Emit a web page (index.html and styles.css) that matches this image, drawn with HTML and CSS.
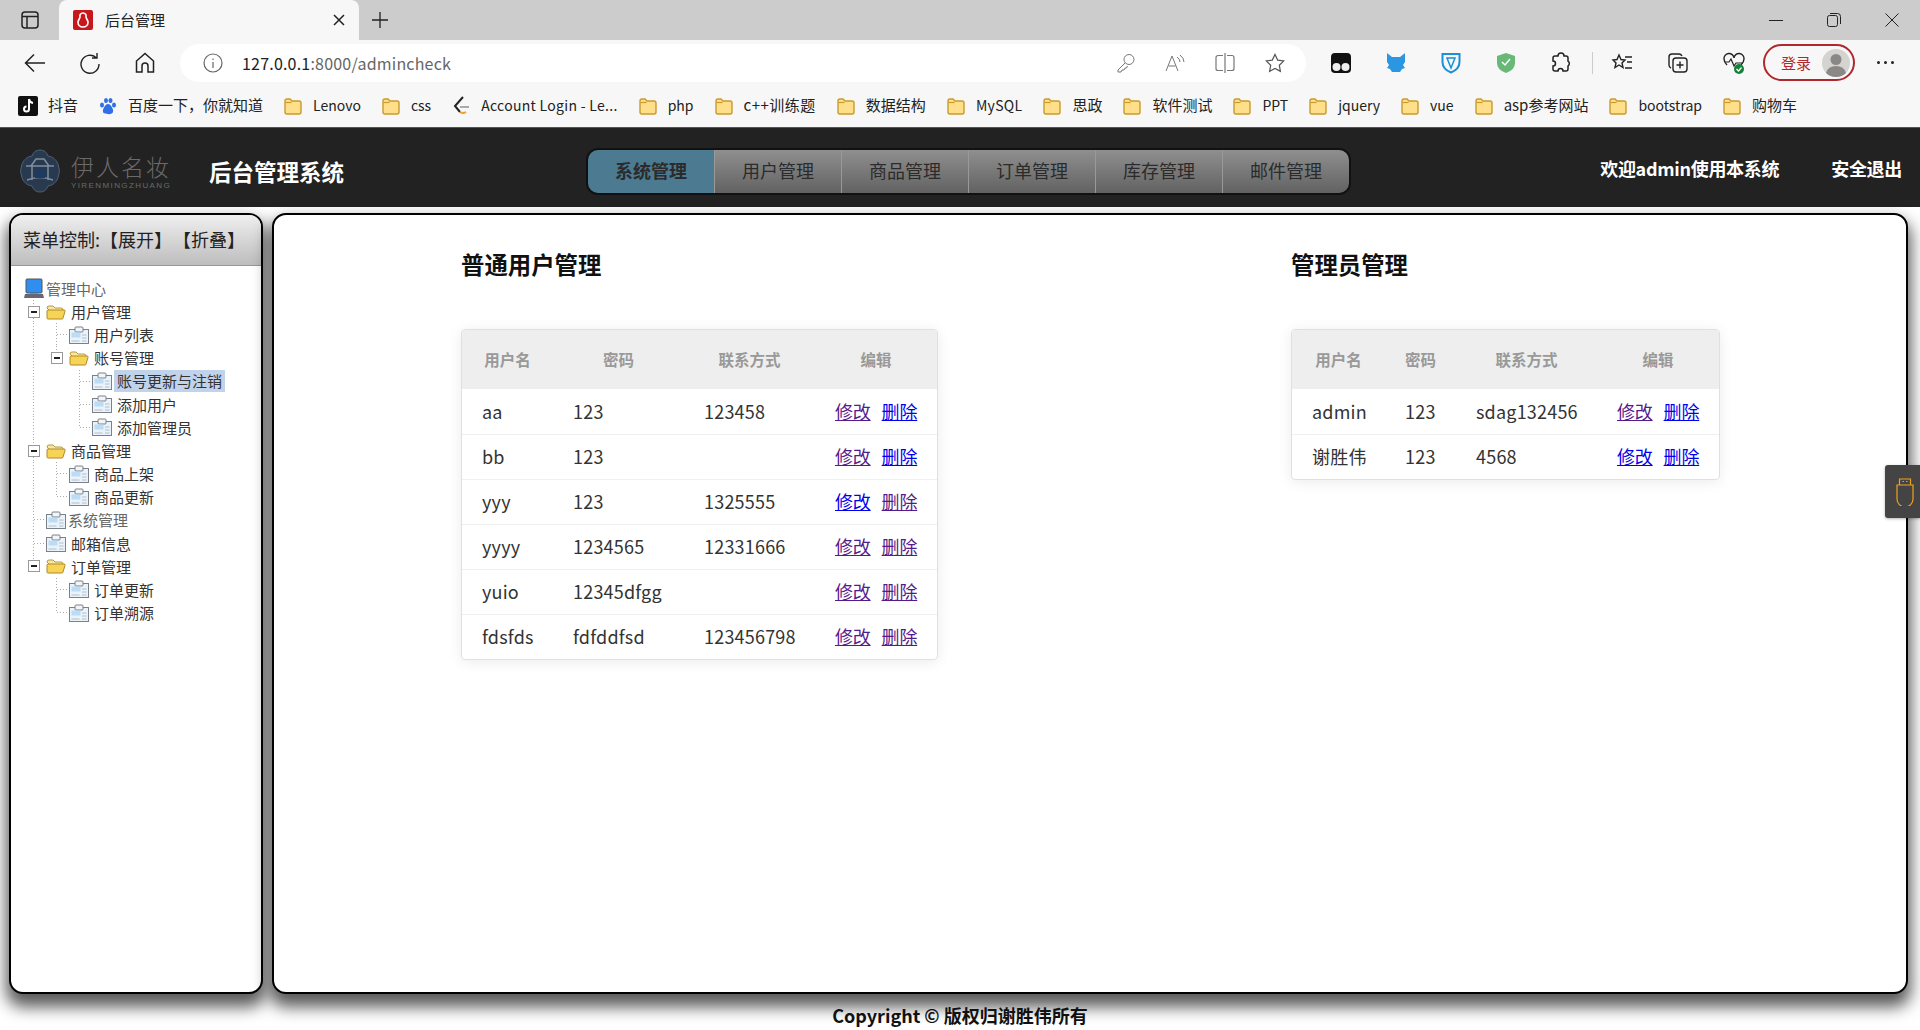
FILE: index.html
```html
<!DOCTYPE html>
<html lang="zh-CN">

<head>
    <meta charset="UTF-8">
    <title>后台管理</title>
    <link rel="stylesheet" href="styles.css">
</head>

<body>
    <svg class="defs" width="0" height="0">
        <symbol id="i-folder" viewBox="0 0 20 20">
            <path d="M2 5a2 2 0 0 1 2-2h3l2 2h7a2 2 0 0 1 2 2v9a2 2 0 0 1-2 2H4a2 2 0 0 1-2-2z" fill="#ffdf8a" stroke="#c99a2e" stroke-width="1.4"/>
            <path d="M2.5 6.5h6" stroke="#c99a2e" stroke-width="1.2"/>
        </symbol>
        <symbol id="i-tfolder" viewBox="0 0 20 16">
            <path d="M1 4q0-2 2-2h4l2 2h6q2 0 2 2v1H4z" fill="#f5e7a8" stroke="#b99a3a"/>
            <path d="M1 14V7q0-1 1-1h16q1.500 0 1 1.500L17 14q0 1-1 1H2q-1 0-1-1z" fill="#f7d455" stroke="#b08a2a"/>
        </symbol>
        <symbol id="i-tdoc" viewBox="0 0 20 18">
            <rect x=".5" y="3.500" width="19" height="14" fill="#e9f3fb" stroke="#7b818a"/>
            <rect x="6" y="1" width="8" height="5" rx="1" fill="#f2f4f6" stroke="#7b818a"/>
            <rect x="2.500" y="6.500" width="9" height="5" fill="#bcdcf5"/>
            <path d="M13 9h4.500M13 12h4.500M13 15h4.500M2.500 15h8" stroke="#b8bdc4"/>
        </symbol>
    </svg>

    <div class="browser">
        <div class="tabstrip">
            <svg class="tab-side" width="18" height="18" viewBox="0 0 18 18" fill="none" stroke="#222" stroke-width="1.500">
                <rect x="1" y="1" width="16" height="16" rx="3"/>
                <path d="M1 5.500h16M6 5.500V17"/>
            </svg>
            <div class="tab">
                <svg width="20" height="20" viewBox="0 0 20 20">
                    <rect width="20" height="20" rx="2" fill="#c8161d"/>
                    <path d="M10 3c-2.500 0-3.500 2-3 4 .2 1-2 3-2 5.500S7 17 10 17s5-2 5-4.500S12.800 8 13 7c.5-2-.5-4-3-4z" fill="none" stroke="#fff" stroke-width="1.600"/>
                </svg>
                <span class="tab-title">后台管理</span>
                <svg class="tab-close" width="12" height="12" viewBox="0 0 12 12" stroke="#222" stroke-width="1.500">
                    <path d="M1 1l10 10M11 1L1 11"/>
                </svg>
            </div>
            <svg class="tab-new" width="18" height="18" viewBox="0 0 18 18" stroke="#222" stroke-width="1.300">
                <path d="M9 1v16M1 9h16"/>
            </svg>
            <div class="win-btns">
                <svg width="14" height="14" viewBox="0 0 14 14" stroke="#222"><path d="M0 7.500h14"/></svg>
                <svg width="14" height="14" viewBox="0 0 14 14" fill="none" stroke="#222"><rect x=".5" y="2.500" width="10" height="11" rx="2"/><path d="M3 .5h7.500a3 3 0 0 1 3 3V11"/></svg>
                <svg width="14" height="14" viewBox="0 0 14 14" stroke="#222"><path d="M.5.5l13 13M13.500.5l-13 13"/></svg>
            </div>
        </div>

        <div class="toolbar">
            <svg class="tb-back" width="22" height="20" viewBox="0 0 22 20" fill="none" stroke="#222" stroke-width="1.500"><path d="M21 10H2M10 1.500L1.500 10l8.500 8.500"/></svg>
            <svg class="tb-reload" width="20" height="22" viewBox="0 0 20 22" fill="none" stroke="#222" stroke-width="1.400"><path d="M16 5.500A9 9 0 1 0 19 12M17 1v5h-5"/></svg>
            <svg class="tb-home" width="20" height="22" viewBox="0 0 20 22" fill="none" stroke="#222" stroke-width="1.500"><path d="M1.500 20V9L10 1.500 18.500 9v11h-5.500v-6a3 3 0 0 0-6 0v6z"/></svg>
            <div class="addr">
                <svg width="20" height="20" viewBox="0 0 20 20" fill="none" stroke="#666" stroke-width="1.200"><circle cx="10" cy="10" r="9"/><path d="M10 9v6M10 5.500v1.500"/></svg>
                <span class="url"><b>127.0.0.1</b>:8000/admincheck</span>
                <div class="addr-icons">
                    <svg width="18" height="20" viewBox="0 0 18 20" fill="none" stroke="#777"><circle cx="12" cy="6.500" r="5"/><path d="M8 10l-7 7v2h3l1-2h2l1-2h1.500l1-2"/></svg>
                    <svg width="20" height="20" viewBox="0 0 20 20" fill="none" stroke="#777"><path d="M1 18L7 3l6 15M3.500 13h7M12 4q3 2 3 5M15 2q4 3 4 7"/></svg>
                    <svg width="20" height="22" viewBox="0 0 20 22" fill="none" stroke="#777" stroke-width="1.200"><path d="M10 1v20M8 3.500H3a2 2 0 0 0-2 2v11a2 2 0 0 0 2 2h5M12 3.500h5a2 2 0 0 1 2 2v11a2 2 0 0 1-2 2h-5"/></svg>
                    <svg width="20" height="20" viewBox="0 0 20 20" fill="none" stroke="#555" stroke-width="1.200"><path d="M10 1.500l2.700 5.600 6.100.8-4.500 4.300 1.100 6.100L10 15.400l-5.400 2.900 1.100-6.100L1.200 7.900l6.100-.8z"/></svg>
                </div>
            </div>
            <div class="ext-icons">
                <svg width="20" height="22" viewBox="0 0 20 22"><rect y="1" width="20" height="20" rx="4" fill="#111"/><circle cx="5.500" cy="15" r="4" fill="#eee"/><circle cx="14.500" cy="15" r="4" fill="#eee"/></svg>
                <svg width="20" height="22" viewBox="0 0 20 22"><path d="M1 1l5 4h8l5-4v9l-2 3 2 3-3 1-2 3H6l-2-3-3-1 2-3-2-3z" fill="#2b97e3"/></svg>
                <svg width="20" height="22" viewBox="0 0 20 22" fill="none" stroke="#1b8fd8" stroke-width="2"><path d="M1.500 2h17v8q0 7-8.500 10.500Q1.500 17 1.500 10z"/><path d="M6 6h8l-4 10z" stroke-width="1.500"/></svg>
                <svg width="20" height="22" viewBox="0 0 20 22"><path d="M10 1l9 3v7q0 7-9 10Q1 18 1 11V4z" fill="#68b878"/><path d="M6 10l3 3 5-6" fill="none" stroke="#fff" stroke-width="1.500"/></svg>
                <svg width="20" height="22" viewBox="0 0 20 22" fill="none" stroke="#222" stroke-width="1.500"><path d="M7 4a3 3 0 0 1 6 0h2a2 2 0 0 1 2 2v3a3 3 0 0 1 0 5v3a2 2 0 0 1-2 2h-3a2.500 2.500 0 0 0-5 0H4a2 2 0 0 1-2-2v-3a2.500 2.500 0 0 0 0-5V6a2 2 0 0 1 2-2z"/></svg>
                <i class="tb-div"></i>
                <svg width="22" height="22" viewBox="0 0 22 22" fill="none" stroke="#222" stroke-width="1.400"><path d="M8 3l2 4.500 4 .5-3 3 1 4.500-4-2.500-4 2.500 1-4.500-3-3 4-.5zM14 5h7M16 10h5M14 16h7"/></svg>
                <svg width="20" height="22" viewBox="0 0 20 22" fill="none" stroke="#222" stroke-width="1.400"><rect x="5" y="6" width="14" height="14" rx="3"/><path d="M3 16q-2-1-2-3V5q0-3 3-3h7q2 0 3 2M12 9.500v7M8.500 13h7"/></svg>
                <svg width="22" height="22" viewBox="0 0 22 22"><path d="M4 13Q1 10 1 7a5 5 0 0 1 10-1 5 5 0 0 1 10 1q0 3-3 6" fill="none" stroke="#222" stroke-width="1.400"/><path d="M2 10h4l2-3 3 7 2-3h7" fill="none" stroke="#222" stroke-width="1.200"/><circle cx="16" cy="17" r="5" fill="#14803a"/><path d="M13.500 17l2 2 3-3.500" fill="none" stroke="#fff" stroke-width="1.200"/></svg>
            </div>
            <div class="login">
                <span>登录</span>
                <svg width="28" height="28" viewBox="0 0 28 28"><circle cx="14" cy="14" r="14" fill="#d5d3d0"/><circle cx="14" cy="10.500" r="5.500" fill="#8a8886"/><path d="M4 24q2-7 10-7t10 7q-4 4-10 4T4 24z" fill="#8a8886"/></svg>
            </div>
            <div class="tb-more"><i></i><i></i><i></i></div>
        </div>

        <div class="bookmarks">
            <a class="bm">
                <svg width="20" height="20" viewBox="0 0 20 20"><rect width="20" height="20" rx="2" fill="#111"/><path d="M11 3v10a2.500 2.500 0 1 1-2.500-2.500M11 3q.5 3.500 4 4" fill="none" stroke="#fff" stroke-width="2"/></svg>
                <span>抖音</span>
            </a>
            <a class="bm">
                <svg width="20" height="20" viewBox="0 0 20 20" fill="#2f6fe8"><ellipse cx="4" cy="9" rx="2" ry="2.500"/><ellipse cx="8" cy="4.500" rx="2" ry="2.500"/><ellipse cx="12.500" cy="4.500" rx="2" ry="2.500"/><ellipse cx="16" cy="9" rx="2" ry="2.500"/><path d="M10 8q2.500 0 4 3.500 2 3 .5 5.500-1.500 1.500-4.500 1t-4.500-1q-1.500-2.500.5-5.500Q7.500 8 10 8z"/></svg>
                <span>百度一下，你就知道</span>
            </a>
            <a class="bm"><svg width="20" height="20"><use href="#i-folder"/></svg><span class="en">Lenovo</span></a>
            <a class="bm"><svg width="20" height="20"><use href="#i-folder"/></svg><span class="en">css</span></a>
            <a class="bm">
                <svg width="20" height="20" viewBox="0 0 20 20" fill="none" stroke-width="2"><path d="M12 1L4 10l5 6" stroke="#222"/><path d="M9 16q3 2 6 0" stroke="#f0a030"/><path d="M9 11h9" stroke="#aaa"/></svg>
                <span class="en wide">Account Login - Le...</span>
            </a>
            <a class="bm"><svg width="20" height="20"><use href="#i-folder"/></svg><span class="en">php</span></a>
            <a class="bm"><svg width="20" height="20"><use href="#i-folder"/></svg><span class="wider">c++训练题</span></a>
            <a class="bm"><svg width="20" height="20"><use href="#i-folder"/></svg><span>数据结构</span></a>
            <a class="bm"><svg width="20" height="20"><use href="#i-folder"/></svg><span class="en wide">MySQL</span></a>
            <a class="bm"><svg width="20" height="20"><use href="#i-folder"/></svg><span>思政</span></a>
            <a class="bm"><svg width="20" height="20"><use href="#i-folder"/></svg><span>软件测试</span></a>
            <a class="bm"><svg width="20" height="20"><use href="#i-folder"/></svg><span class="en">PPT</span></a>
            <a class="bm"><svg width="20" height="20"><use href="#i-folder"/></svg><span class="en">jquery</span></a>
            <a class="bm"><svg width="20" height="20"><use href="#i-folder"/></svg><span class="en">vue</span></a>
            <a class="bm"><svg width="20" height="20"><use href="#i-folder"/></svg><span>asp参考网站</span></a>
            <a class="bm"><svg width="20" height="20"><use href="#i-folder"/></svg><span class="en">bootstrap</span></a>
            <a class="bm"><svg width="20" height="20"><use href="#i-folder"/></svg><span>购物车</span></a>
        </div>
    </div>

    <header class="top">
        <div class="logo">
            <svg width="44" height="44" viewBox="0 0 44 44">
                <path d="M22 1q6 0 8 6 7 1 10 8 3 7 0 14-3 7-10 8-2 6-8 6t-8-6q-7-1-10-8-3-7 0-14 3-7 10-8 2-6 8-6z" fill="#2a3a4e" stroke="#4d6077"/>
                <path d="M8 17h28M13 17l5-7h8l5 7M14 17v14M30 17v14M9 31q13-5 26 0" fill="none" stroke="#7e8fa3" stroke-width="1.500"/>
                <path d="M17 21h10v8H17z" fill="#1d3a63"/>
            </svg>
            <div class="logo-text">
                <span class="logo-cn">伊人名妆</span>
                <span class="logo-en">YIRENMINGZHUANG</span>
            </div>
            <h1>后台管理系统</h1>
        </div>
        <nav class="menu">
            <a class="active">系统管理</a>
            <a>用户管理</a>
            <a>商品管理</a>
            <a>订单管理</a>
            <a>库存管理</a>
            <a>邮件管理</a>
        </nav>
        <div class="user">
            <span>欢迎admin使用本系统</span>
            <span>安全退出</span>
        </div>
    </header>

    <div class="page">
        <aside class="side">
            <div class="side-head">菜单控制:【展开】 【折叠】</div>
            <ul class="tree">
                <li class="root">
                    <svg width="20" height="22" viewBox="0 0 20 22">
                        <rect x="2" y="1" width="16" height="14" rx="1" fill="#2f8ef0" stroke="#555"/>
                        <path d="M6 15h8v1H6z" fill="#889"/>
                        <path d="M1 16h18l1 4H0z" fill="#667"/>
                    </svg>
                    <span class="t-gap grey">管理中心</span>
                </li>
                <li><i class="c minus"><b></b></i><svg class="t-ic" width="20" height="16"><use href="#i-tfolder"/></svg><span>用户管理</span></li>
                <li><i class="c line"></i><i class="c tee"></i><svg class="t-ic" width="20" height="18"><use href="#i-tdoc"/></svg><span>用户列表</span></li>
                <li><i class="c line"></i><i class="c minus-end"><b></b></i><svg class="t-ic" width="20" height="16"><use href="#i-tfolder"/></svg><span>账号管理</span></li>
                <li><i class="c line"></i><i class="c"></i><i class="c tee"></i><svg class="t-ic" width="20" height="18"><use href="#i-tdoc"/></svg><span class="sel">账号更新与注销</span></li>
                <li><i class="c line"></i><i class="c"></i><i class="c tee"></i><svg class="t-ic" width="20" height="18"><use href="#i-tdoc"/></svg><span>添加用户</span></li>
                <li><i class="c line"></i><i class="c"></i><i class="c end"></i><svg class="t-ic" width="20" height="18"><use href="#i-tdoc"/></svg><span>添加管理员</span></li>
                <li><i class="c minus"><b></b></i><svg class="t-ic" width="20" height="16"><use href="#i-tfolder"/></svg><span>商品管理</span></li>
                <li><i class="c line"></i><i class="c tee"></i><svg class="t-ic" width="20" height="18"><use href="#i-tdoc"/></svg><span>商品上架</span></li>
                <li><i class="c line"></i><i class="c end"></i><svg class="t-ic" width="20" height="18"><use href="#i-tdoc"/></svg><span>商品更新</span></li>
                <li><i class="c tee"></i><svg class="t-ic" width="20" height="18"><use href="#i-tdoc"/></svg><span class="t-near grey">系统管理</span></li>
                <li><i class="c tee"></i><svg class="t-ic" width="20" height="18"><use href="#i-tdoc"/></svg><span>邮箱信息</span></li>
                <li><i class="c minus-end"><b></b></i><svg class="t-ic" width="20" height="16"><use href="#i-tfolder"/></svg><span>订单管理</span></li>
                <li><i class="c"></i><i class="c tee"></i><svg class="t-ic" width="20" height="18"><use href="#i-tdoc"/></svg><span>订单更新</span></li>
                <li><i class="c"></i><i class="c end"></i><svg class="t-ic" width="20" height="18"><use href="#i-tdoc"/></svg><span>订单溯源</span></li>
            </ul>
        </aside>

        <main class="main">
            <section class="block block-users">
                <h2>普通用户管理</h2>
                <table>
                    <colgroup><col class="w91"><col class="w131"><col class="w131"><col class="w122"></colgroup>
                    <thead>
                        <tr><th>用户名</th><th>密码</th><th>联系方式</th><th>编辑</th></tr>
                    </thead>
                    <tbody>
                        <tr><td>aa</td><td>123</td><td>123458</td><td><a class="seen" href="#">修改</a><a href="#">删除</a></td></tr>
                        <tr><td>bb</td><td>123</td><td></td><td><a class="seen" href="#">修改</a><a href="#">删除</a></td></tr>
                        <tr><td>yyy</td><td>123</td><td>1325555</td><td><a href="#">修改</a><a class="seen" href="#">删除</a></td></tr>
                        <tr><td>yyyy</td><td>1234565</td><td>12331666</td><td><a class="seen" href="#">修改</a><a class="seen" href="#">删除</a></td></tr>
                        <tr><td>yuio</td><td>12345dfgg</td><td></td><td><a class="seen" href="#">修改</a><a class="seen" href="#">删除</a></td></tr>
                        <tr><td>fdsfds</td><td>fdfddfsd</td><td>123456798</td><td><a class="seen" href="#">修改</a><a class="seen" href="#">删除</a></td></tr>
                    </tbody>
                </table>
            </section>
            <section class="block block-admins">
                <h2>管理员管理</h2>
                <table>
                    <colgroup><col class="w93"><col class="w71"><col class="w141"><col class="w122"></colgroup>
                    <thead>
                        <tr><th>用户名</th><th>密码</th><th>联系方式</th><th>编辑</th></tr>
                    </thead>
                    <tbody>
                        <tr><td>admin</td><td>123</td><td>sdag132456</td><td><a class="seen" href="#">修改</a><a href="#">删除</a></td></tr>
                        <tr><td>谢胜伟</td><td>123</td><td>4568</td><td><a href="#">修改</a><a href="#">删除</a></td></tr>
                    </tbody>
                </table>
            </section>
        </main>
    </div>

    <footer class="foot">Copyright © 版权归谢胜伟所有</footer>

    <div class="float-tab">
        <svg width="18" height="28" viewBox="0 0 18 28" fill="none" stroke="#f0a020" stroke-width="1.200">
            <path d="M3.500 1h11v6h-11zM1 7h16v14a6 6 0 0 1-16 0zM6.500 3.500h1.500M10 3.500h1.500"/>
        </svg>
    </div>
</body>

</html>
```

FILE: styles.css
```css
* {
    margin: 0;
    padding: 0;
    box-sizing: border-box;
}

html, body {
    height: 100%;
    overflow: hidden;
}

body {
    display: flex;
    flex-direction: column;
    background-color: #fff;
    color: #333;
    font-family: "Noto Sans CJK SC", "Liberation Sans", sans-serif;
}

.defs {
    position: absolute;
}

/* browser chrome */
.browser {
    height: 128px;
    background-color: #f7f7f7;
    border-bottom: 1px solid #555;
    flex-shrink: 0;
}

.tabstrip {
    height: 40px;
    background-color: #ccc;
    display: flex;
    align-items: center;
}

.tab-side {
    margin-left: 21px;
}

.tab {
    width: 300px;
    height: 40px;
    margin-left: 20px;
    padding: 0 14px;
    background-color: #f7f7f7;
    border-radius: 8px 8px 0 0;
    display: flex;
    align-items: center;
}

.tab-title {
    margin-left: 12px;
    padding-bottom: 2px;
    font-size: 15px;
    color: #222;
}

.tab-close {
    margin-left: auto;
    margin-right: 0;
}

.tab-new {
    margin-left: 12px;
}

.win-btns {
    margin-left: auto;
    padding-right: 21px;
    display: flex;
    gap: 44px;
}

.toolbar {
    height: 45px;
    display: flex;
    align-items: center;
}

.tb-back {
    margin-left: 24px;
}

.tb-reload {
    margin-left: 34px;
}

.tb-home {
    margin-left: 35px;
}

.addr {
    width: 1126px;
    height: 38px;
    margin-left: 25px;
    padding: 0 21px 0 23px;
    background-color: #fff;
    border-radius: 19px;
    display: flex;
    align-items: center;
}

.url {
    margin-left: 19px;
    font-size: 16px;
    letter-spacing: .2px;
    color: #666;
}

.url b {
    font-weight: normal;
    color: #222;
}

.addr-icons {
    margin-left: auto;
    display: flex;
    align-items: center;
    gap: 30px;
}

.ext-icons {
    margin-left: 25px;
    display: flex;
    align-items: center;
    gap: 35px;
}

.tb-div {
    width: 1px;
    height: 22px;
    margin: 0 -17px 0 -14px;
    background-color: #ccc;
}

.login {
    width: 92px;
    height: 37px;
    margin-left: 18px;
    padding: 0 3px 0 16px;
    border: 2px solid #b0282e;
    border-radius: 19px;
    display: flex;
    align-items: center;
    justify-content: space-between;
    font-size: 15px;
    color: #b0282e;
}

.tb-more {
    margin-left: 22px;
    display: flex;
    gap: 4px;
}

.tb-more i {
    width: 3px;
    height: 3px;
    border-radius: 50%;
    background-color: #222;
}

.bookmarks {
    height: 42px;
    padding-left: 8px;
    display: flex;
    align-items: center;
}

.bm {
    padding: 0 10px;
    display: flex;
    align-items: center;
    gap: 10px;
    font-size: 15px;
    color: #222;
    white-space: nowrap;
}

.bm span {
    padding-bottom: 3px;
}

.bm .en {
    font-size: 14px;
}

.bm .wide {
    letter-spacing: .3px;
}

.bm .wider {
    letter-spacing: .5px;
}

/* site header */
.top {
    height: 79px;
    padding-top: 7px;
    background-color: #222;
    display: flex;
    align-items: center;
    flex-shrink: 0;
}

.logo {
    width: 586px;
    padding-left: 18px;
    display: flex;
    align-items: center;
}

.logo-text {
    width: 100px;
    margin-left: 9px;
    display: flex;
    flex-direction: column;
    color: #6a6a6a;
}

.logo-cn {
    font-size: 23px;
    font-weight: 300;
    letter-spacing: 2px;
    line-height: 30px;
    white-space: nowrap;
}

.logo-en {
    font-family: "Liberation Sans", sans-serif;
    font-size: 8px;
    letter-spacing: 1.400px;
    line-height: 10px;
    white-space: nowrap;
}

h1 {
    margin-left: 38px;
    font-size: 22.500px;
    color: #fff;
}

.menu {
    display: flex;
    border: 2px solid #111;
    border-radius: 12px;
    overflow: hidden;
}

.menu a {
    width: 127px;
    height: 43px;
    line-height: 41px;
    text-align: center;
    font-size: 18px;
    color: #2b2b2b;
    background: linear-gradient(#8f8f8f, #626262);
    border-left: 1px solid #999;
}

.menu a.active {
    width: 126px;
    background: #4c7a90;
    border-left: 0;
    font-weight: bold;
}

.user {
    margin: -7px 0 0 auto;
    padding-right: 18px;
    display: flex;
    gap: 52px;
    font-size: 18px;
    font-weight: bold;
    letter-spacing: -.3px;
    color: #fff;
}

/* panels */
.page {
    height: 787px;
    padding: 6px 12px 0 9px;
    display: flex;
    gap: 9px;
    flex-shrink: 0;
}

.side, .main {
    height: 781px;
    background-color: #fff;
    border: 2px solid #000;
    border-radius: 14px;
    box-shadow: 0 10px 16px 3px rgba(0, 0, 0, .65);
}

.side {
    width: 254px;
    flex-shrink: 0;
}

.side-head {
    height: 51px;
    padding-left: 12px;
    line-height: 49px;
    font-size: 18px;
    word-spacing: -3px;
    color: #222;
    background: linear-gradient(#efefef, #bdbdbd);
    border-bottom: 1px solid #6f9fd8;
    border-radius: 12px 12px 0 0;
    white-space: nowrap;
}

.tree {
    padding: 11px 0 0 11px;
    list-style: none;
    font-size: 15px;
}

.tree li {
    height: 23.150px;
    display: flex;
    align-items: center;
}

.root {
    padding-left: 2px;
}

.t-gap {
    margin-left: 2px;
}

.t-ic {
    margin: 0 5px 0 1px;
    flex-shrink: 0;
}

.t-near {
    margin-left: -3px;
}

.grey {
    color: #666;
}

.sel {
    padding: 0 3px;
    margin-left: -3px;
    line-height: 22px;
    background-color: #c1d2eb;
}

.c {
    width: 23px;
    height: 100%;
    flex-shrink: 0;
    display: flex;
    align-items: center;
    justify-content: center;
}

.line, .tee, .minus {
    background: repeating-linear-gradient(#aaa 0 1px, transparent 1px 3px) 11px 0 / 1px 100% no-repeat;
}

.end, .minus-end {
    background: repeating-linear-gradient(#aaa 0 1px, transparent 1px 3px) 11px 0 / 1px 50% no-repeat;
}

.tee::after, .end::after {
    content: "";
    width: 11px;
    height: 1px;
    margin-left: 12px;
    background: repeating-linear-gradient(90deg, #aaa 0 1px, transparent 1px 3px);
}

.c b {
    width: 12px;
    height: 12px;
    background-color: #fff;
    border: 1px solid #999;
    display: flex;
    align-items: center;
    justify-content: center;
}

.c b::after {
    content: "";
    width: 6px;
    height: 2px;
    background-color: #222;
}

/* tables */
.main {
    flex: 1;
    display: flex;
    padding-left: 187px;
}

.block-users {
    width: 475px;
}

.block-admins {
    margin-left: 355px;
    width: 428px;
}

h2 {
    height: 114px;
    padding-top: 32px;
    font-size: 23.400px;
    line-height: 34px;
    color: #111;
}

table {
    width: 100%;
    table-layout: fixed;
    border-collapse: separate;
    border-spacing: 0;
    border: 1px solid #e0e0e0;
    border-radius: 4px;
    box-shadow: 0 2px 14px rgba(0, 0, 0, .08);
    overflow: hidden;
}

.w91 { width: 91px; }
.w131 { width: 131px; }
.w93 { width: 93px; }
.w71 { width: 71px; }
.w141 { width: 141px; }
.w122 { width: 122px; }

th {
    height: 59px;
    padding-bottom: 2px;
    background-color: #eee;
    font-size: 15.500px;
    color: #999;
    text-align: center;
}

td {
    height: 45px;
    padding: 0 0 2px 20px;
    font-size: 18px;
    letter-spacing: .2px;
    color: #333;
    border-top: 1px solid #f0f0f0;
    white-space: nowrap;
}

tbody tr:first-child td {
    border-top: 0;
}

td a {
    color: #00e;
    margin-right: 11px;
    letter-spacing: -.2px;
}

td a.seen {
    color: #551a8b;
}

.foot {
    margin-top: 9px;
    text-align: center;
    font-size: 18px;
    font-weight: bold;
    color: #111;
    line-height: 24px;
}

.float-tab {
    position: absolute;
    top: 465px;
    right: 0;
    width: 35px;
    height: 53px;
    background-color: #444;
    border-radius: 3px 0 0 3px;
    display: flex;
    align-items: center;
    padding-left: 11px;
    box-shadow: 0 1px 3px rgba(0, 0, 0, .3);
}
```
